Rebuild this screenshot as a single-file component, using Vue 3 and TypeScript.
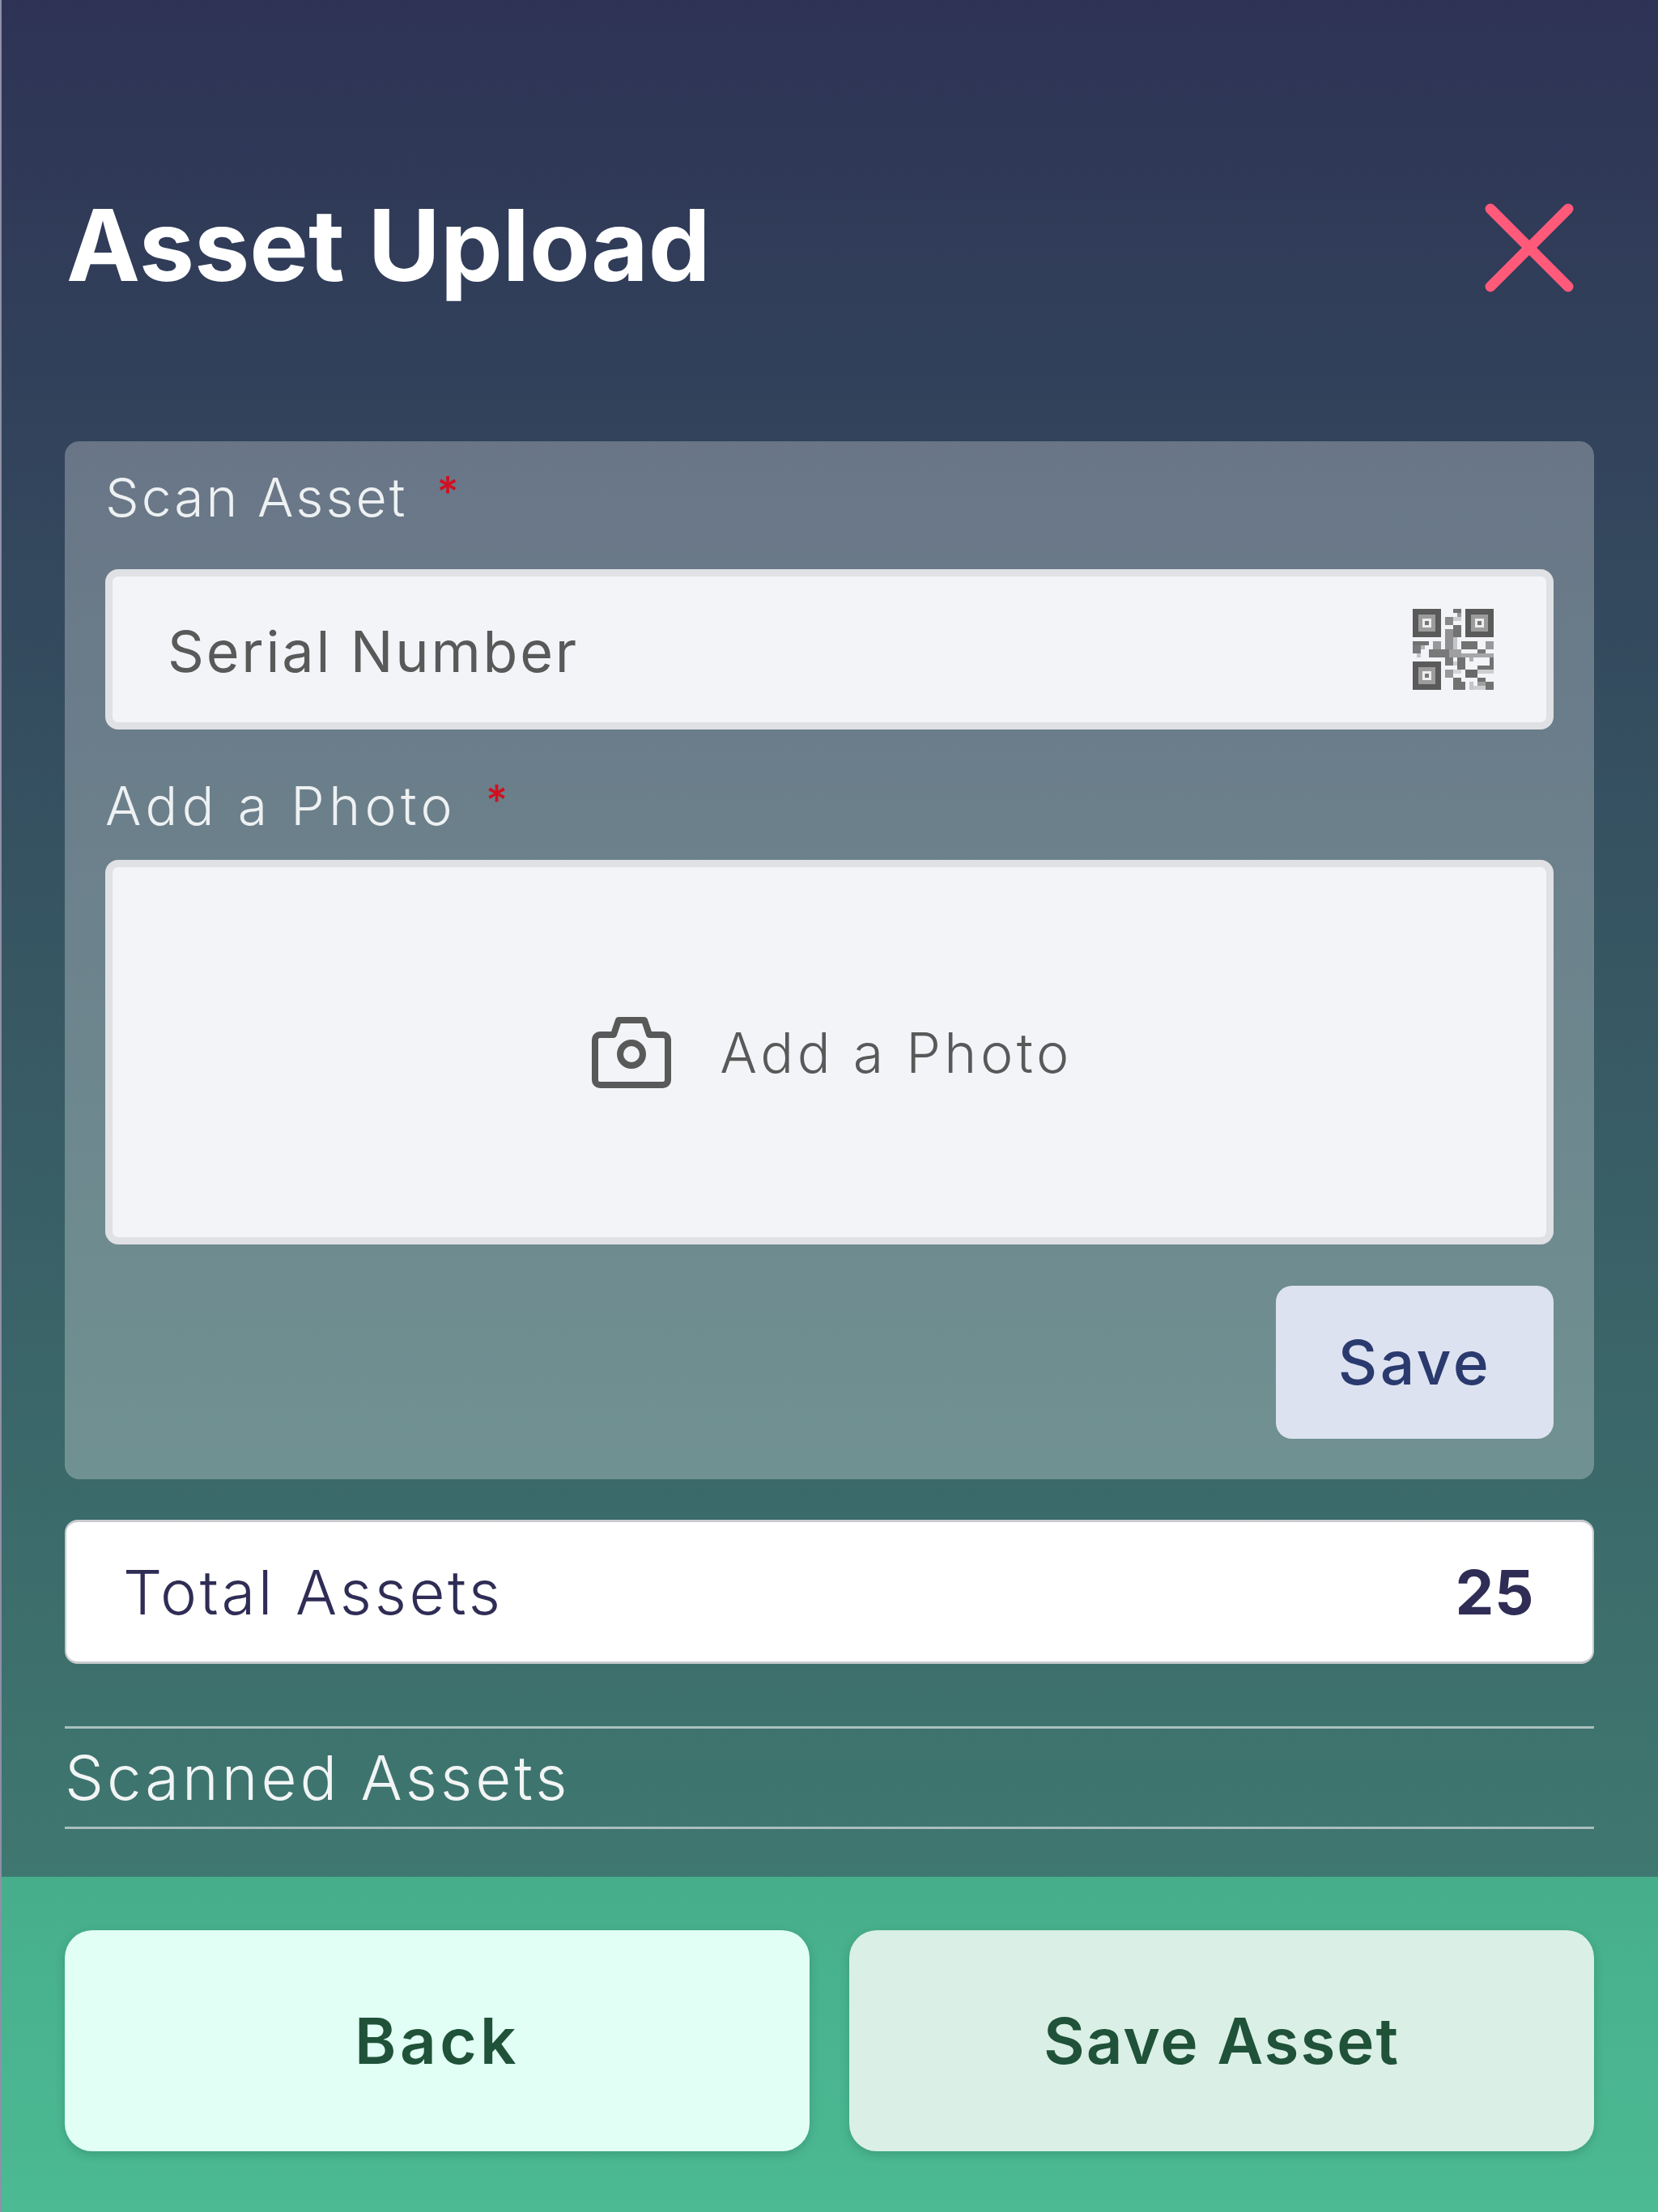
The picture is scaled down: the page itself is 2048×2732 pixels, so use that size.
<script setup lang="ts">
// x, y, width, height, opacity of the QR data modules
const qrCells: [number, number, number, number, number][] = [
  [50, 0, 10, 5, 0.85], [55, 5, 5, 5, 0.6], [40, 10, 10, 10, 0.7], [50, 10, 10, 5, 0.25],
  [50, 20, 10, 15, 0.85], [40, 25, 10, 25, 0.65], [50, 35, 5, 5, 0.3],
  [0, 40, 20, 5, 0.85], [0, 45, 10, 10, 0.8], [5, 55, 5, 5, 0.3], [10, 45, 5, 5, 0.4],
  [25, 40, 10, 10, 0.6], [20, 50, 25, 10, 0.8], [45, 50, 15, 10, 0.55], [50, 40, 5, 10, 0.3],
  [60, 40, 20, 10, 0.85], [90, 40, 10, 10, 0.6], [60, 55, 40, 5, 0.5], [80, 50, 10, 5, 0.8],
  [40, 60, 10, 10, 0.8], [55, 60, 10, 15, 0.85], [50, 65, 5, 5, 0.25], [70, 60, 5, 5, 0.45],
  [80, 70, 20, 5, 0.85], [95, 60, 5, 10, 0.85], [40, 75, 10, 10, 0.6], [65, 75, 15, 10, 0.9],
  [80, 75, 20, 5, 0.25], [50, 75, 10, 5, 0.2], [50, 85, 10, 15, 0.85], [60, 90, 5, 10, 0.85],
  [80, 85, 10, 5, 0.85], [70, 90, 5, 10, 0.3], [80, 90, 10, 5, 0.55], [90, 90, 10, 10, 0.85],
  [75, 95, 15, 5, 0.25]
]
const finders: [number, number][] = [[0, 0], [65, 0], [0, 65]]
</script>

<template>
  <div class="screen">
    <div class="content">
      <header class="title-row">
        <h1 class="title">Asset Upload</h1>
        <svg class="close" viewBox="0 0 110 110" aria-label="Close">
          <path d="M7 7 103 103M103 7 7 103" />
        </svg>
      </header>

      <section class="card">
        <div class="label label-first">Scan Asset<span class="star">*</span></div>
        <div class="field serial">
          <span class="serial-text">Serial Number</span>
          <svg class="qr" viewBox="0 0 100 100" shape-rendering="crispEdges" aria-hidden="true">
            <g v-for="(f, i) in finders" :key="i" :transform="`translate(${f[0]} ${f[1]})`">
              <rect width="35" height="35" fill="#5a5a5a" />
              <rect x="7" y="7" width="21" height="21" fill="#9c9c9c" />
              <rect x="12" y="12" width="11" height="11" fill="#eeeeee" />
              <rect x="15" y="15" width="5" height="5" fill="#777777" />
            </g>
            <rect
              v-for="(c, i) in qrCells"
              :key="'c' + i"
              :x="c[0]"
              :y="c[1]"
              :width="c[2]"
              :height="c[3]"
              fill="#5a5a5a"
              :opacity="c[4]"
            />
          </svg>
        </div>
        <div class="label label-second">Add a Photo<span class="star">*</span></div>
        <div class="field photo">
          <svg class="camera" viewBox="0 0 98 89" aria-hidden="true">
            <path d="M4 29a6 6 0 0 1 6-6h17l6-18h32l6 18h17a6 6 0 0 1 6 6v50a6 6 0 0 1-6 6H10a6 6 0 0 1-6-6Z" />
            <circle cx="49" cy="47" r="14" />
          </svg>
          <span>Add a Photo</span>
        </div>
        <div class="card-actions">
          <button class="save" type="button">Save</button>
        </div>
      </section>

      <div class="total">
        <span>Total Assets</span>
        <strong>25</strong>
      </div>

      <div class="scanned">Scanned Assets</div>
    </div>

    <footer class="footer">
      <button class="foot-btn back" type="button">Back</button>
      <button class="foot-btn save-asset" type="button">Save Asset</button>
    </footer>
  </div>
</template>

<style>
html, body { margin: 0; padding: 0; background: #2e3355; }
</style>

<style scoped>
.screen {
  width: 2048px;
  height: 2732px;
  display: flex;
  flex-direction: column;
  overflow: hidden;
  box-sizing: border-box;
  border-left: 2px solid #8f90a6;
  font-family: Inter, "Liberation Sans", sans-serif;
  background: linear-gradient(180deg, #2e3355 0%, #3f7870 85%);
}
.content {
  flex: 1;
  display: flex;
  flex-direction: column;
  padding: 0 79px 0 78px;
}
.title-row {
  height: 545px;
  box-sizing: border-box;
  padding: 251px 25px 0 2px;
  display: flex;
  justify-content: space-between;
  align-items: flex-start;
}
.title {
  margin: -3px 0 0;
  color: #fff;
  font-size: 122px;
  line-height: 110px;
  font-weight: 700;
  letter-spacing: 0;
}
.close {
  width: 110px;
  height: 110px;
  fill: none;
  stroke: #ff5a7a;
  stroke-width: 13;
  stroke-linecap: round;
}
.card {
  height: 1282px;
  box-sizing: border-box;
  padding: 0 50px;
  border-radius: 18px;
  background: rgba(255, 255, 255, 0.27);
  display: flex;
  flex-direction: column;
}
.label {
  color: #eef1f2;
  font-size: 66px;
  line-height: 80px;
  font-weight: 300;
}
.label-first { padding-top: 23px; height: 135px; letter-spacing: 3px; }
.label-second { padding-top: 48px; height: 113px; letter-spacing: 5.4px; }
.star {
  color: #d01020;
  font-size: 52px;
  vertical-align: 12px;
  margin-left: 36px;
  font-weight: 500;
  letter-spacing: 0;
}
.field {
  box-sizing: border-box;
  border: 9px solid #e0e1e4;
  border-radius: 16px;
  background: #f2f4f8;
  color: #595959;
  font-size: 70px;
  display: flex;
  align-items: center;
}
.serial {
  height: 198px;
  padding: 0 65px 0 68px;
  justify-content: space-between;
  letter-spacing: 2.8px;
}
.serial-text { padding-top: 5px; }
.qr { width: 100px; height: 100px; flex: none; }
.photo {
  height: 475px;
  justify-content: center;
  gap: 60px;
  padding-left: 7px;
  font-weight: 300;
  font-size: 68px;
  letter-spacing: 4.5px;
}
.camera {
  width: 98px;
  height: 89px;
  flex: none;
  fill: none;
  stroke: #595959;
  stroke-width: 8;
  stroke-linejoin: round;
}
.card-actions {
  display: flex;
  justify-content: flex-end;
  margin-top: 51px;
}
.save {
  width: 343px;
  height: 189px;
  border: 0;
  padding: 0;
  border-radius: 20px;
  background: #dce2f0;
  color: #2a3a6e;
  font: 500 75px Inter, "Liberation Sans", sans-serif;
  letter-spacing: 3.5px;
}
.total {
  height: 178px;
  margin-top: 50px;
  box-sizing: border-box;
  padding: 0 72px 0 70px;
  border-radius: 16px;
  background: #fff;
  border-style: solid;
  border-color: #c9cbce;
  border-width: 3px 2px;
  color: #2f2d55;
  font-size: 76px;
  font-weight: 300;
  letter-spacing: 3.6px;
  display: flex;
  justify-content: space-between;
  align-items: center;
}
.total strong { font-weight: 700; font-size: 76px; letter-spacing: 0.5px; }
.scanned {
  margin-top: 77px;
  height: 121px;
  border-top: 3px solid #a9bfbd;
  border-bottom: 3px solid #a9bfbd;
  color: #f2f5f5;
  font-size: 76px;
  font-weight: 300;
  line-height: 120px;
  letter-spacing: 4px;
}
.footer {
  height: 414px;
  box-sizing: border-box;
  padding: 66px 79px 75px 78px;
  display: flex;
  gap: 49px;
  background: linear-gradient(180deg, #47ae8c, #4cba93);
}
.foot-btn {
  flex: 1;
  border: 0;
  padding: 0;
  border-radius: 34px;
  color: #1f5238;
  font: 600 78px Inter, "Liberation Sans", sans-serif;
  box-shadow: 0 4px 12px rgba(20, 80, 60, 0.25);
}
.back { background: #e1fff5; letter-spacing: 4.5px; }
.save-asset { background: #daefe5; letter-spacing: 2px; }
</style>
